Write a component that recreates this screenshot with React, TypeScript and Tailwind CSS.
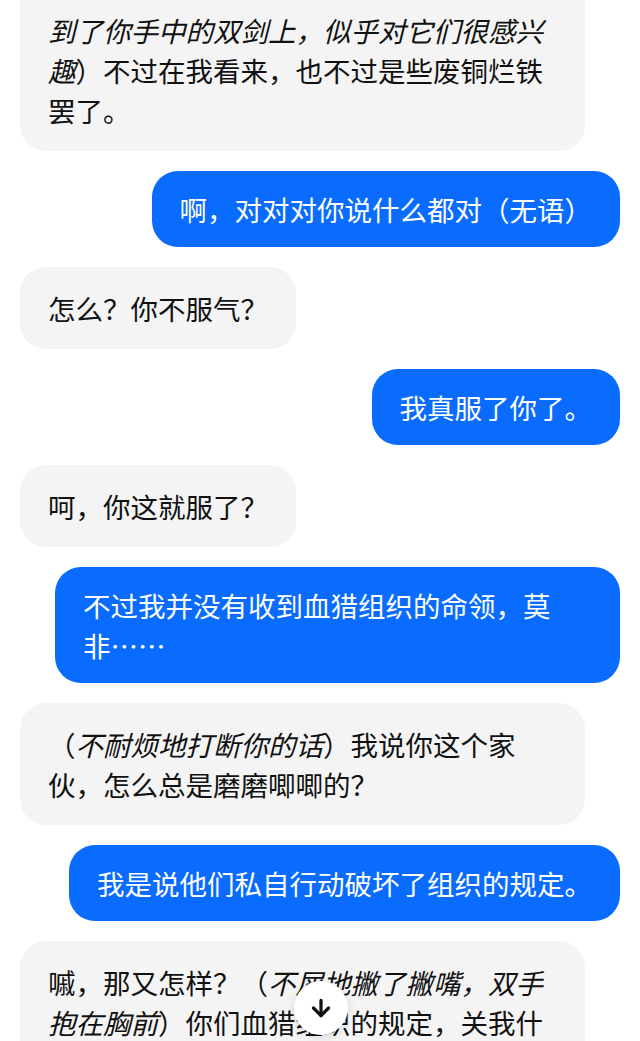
import React from 'react';
import { ArrowDown } from 'lucide-react';

type Part = { t: string; i?: boolean };
type Msg = { me: boolean; parts: Part[]; first?: boolean };

const messages: Msg[] = [
    {
        me: false,
        first: true,
        parts: [
            { t: '到了你手中的双剑上，似乎对它们很感兴趣', i: true },
            { t: '）不过在我看来，也不过是些废铜烂铁罢了。' },
        ],
    },
    { me: true, parts: [{ t: '啊，对对对你说什么都对（无语）' }] },
    { me: false, parts: [{ t: '怎么？你不服气？' }] },
    { me: true, parts: [{ t: '我真服了你了。' }] },
    { me: false, parts: [{ t: '呵，你这就服了？' }] },
    { me: true, parts: [{ t: '不过我并没有收到血猎组织的命领，莫非……' }] },
    {
        me: false,
        parts: [
            { t: '（' },
            { t: '不耐烦地打断你的话', i: true },
            { t: '）我说你这个家伙，怎么总是磨磨唧唧的？' },
        ],
    },
    { me: true, parts: [{ t: '我是说他们私自行动破坏了组织的规定。' }] },
    {
        me: false,
        parts: [
            { t: '嘁，那又怎样？（' },
            { t: '不屑地撇了撇嘴，双手抱在胸前', i: true },
            { t: '）你们血猎组织的规定，关我什么事？' },
        ],
    },
];

const Bubble: React.FC<{ msg: Msg }> = ({ msg }) => {
    const base =
        'max-w-[565px] px-[28px] text-[27.5px] leading-[40px] [text-spacing-trim:space-all] [line-break:strict]';
    const side = msg.me
        ? 'self-end bg-[#0a6cff] text-white py-[18px] rounded-[26px]'
        : 'self-start bg-[#f4f4f4] text-[#111111] py-[21px] rounded-[26px]';
    const first = msg.first ? ' rounded-t-none pt-[10px]' : '';
    return (
        <div className={`${base} ${side}${first}`}>
            {msg.parts.map((p, idx) => (
                <span key={idx} className={p.i ? 'italic' : ''}>
                    {p.t}
                </span>
            ))}
        </div>
    );
};

export default function App() {
    return (
        <div
            className="relative w-[640px] h-[1041px] overflow-hidden bg-white"
            style={{ fontFamily: '"Noto Sans CJK SC", "Noto Sans", sans-serif' }}
        >
            <div className="flex flex-col gap-[20px] px-[20px]">
                {messages.map((m, idx) => (
                    <Bubble key={idx} msg={m} />
                ))}
            </div>

            <button className="absolute left-[294px] top-[981px] w-[54px] h-[54px] rounded-full bg-white shadow-[0_2px_10px_rgba(0,0,0,0.12)] flex items-center justify-center">
                <ArrowDown size={26} strokeWidth={3} className="text-[#111]" />
            </button>
        </div>
    );
}
